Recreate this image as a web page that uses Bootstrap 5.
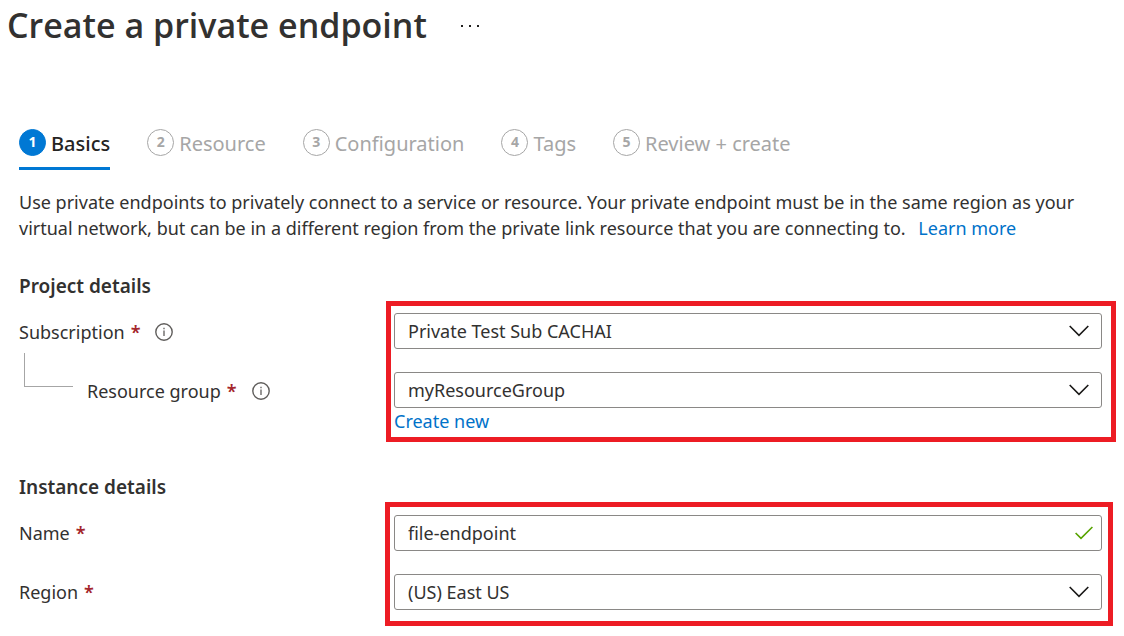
<!DOCTYPE html>
<html lang="en">
<head>
<meta charset="utf-8">
<meta name="viewport" content="width=device-width, initial-scale=1">
<title>Create a private endpoint</title>
<link href="https://cdn.jsdelivr.net/npm/bootstrap@5.3.0/dist/css/bootstrap.min.css" rel="stylesheet">
<style>
  body { font-family: "Noto Sans", "Open Sans", sans-serif; font-size: 18px; line-height: 26px; color: #323130; background: #fff; }
  a { color: #0072c9; text-decoration: none; }
  .page-head { padding-left: 7px; }
  .page-body { padding-left: 19px; }
  .page-title { font-family: "Open Sans", "Noto Sans", sans-serif; font-size: 34px; line-height: 50px; font-weight: 600; }
  .more-btn { color: #201f1e; line-height: 0; margin-left: 23px; }
  .wizard { gap: 37px; margin-top: 79px; font-size: 20px; }
  .wizard .nav-link { gap: 5px; padding: 0 0 11px; color: #a6a6a6; border-bottom: 3px solid transparent; }
  .wizard .nav-link.active { color: #252423; font-weight: 500; border-color: #0078d4; }
  .step-no { width: 27px; height: 27px; border: 1px solid #a6a6a6; border-radius: 50%; font-size: 14px; line-height: 24px; font-weight: 700; text-align: center; }
  .step-name { line-height: 24px; padding-top: 3px; }
  .active .step-no { background: #0078d4; border-color: #0078d4; color: #fff; }
  .intro { margin: 19px 16px 0 0; }
  .section-title { font-size: 19px; line-height: 26px; font-weight: 600; }
  .section-body { margin-top: 2px; }
  .labels { flex: 0 0 367px; gap: 23px; padding-top: 13px; }
  .label-row { height: 36px; gap: 6px; }
  .req { color: #a4262c; font-weight: 600; }
  .info-btn { line-height: 0; margin-left: 9px; color: #605e5c; }
  .branch { width: 49px; height: 34px; border: solid #a6a6a6; border-width: 0 0 1px 1px; margin: -43px 8px 0 5px; }
  .marked { border: 5px solid #ed1c24; padding: 7px 9px 3px 3px; margin-right: 8px; }
  .marked-instance { padding: 8px 6px 11px 4px; margin: 0 11px 0 -1px; }
  .marked .form-select, .marked .form-control { height: 36px; padding: 0 40px 0 13px; border: 1px solid #8a8886; border-radius: 3px; font-size: 18px; line-height: 26px; color: #323130; background-color: #fff; }
  .marked .field-gap { margin-bottom: 23px; }
  .marked .form-select { background-image: url("data:image/svg+xml,%3Csvg xmlns='http://www.w3.org/2000/svg' viewBox='0 0 20 12'%3E%3Cpath d='M.7 1 10 10.3 19.3 1' fill='none' stroke='%231b1a19' stroke-width='1.6'/%3E%3C/svg%3E"); background-size: 20px 12px; background-position: right 12px center; }
  .marked .form-control { background: url("data:image/svg+xml,%3Csvg xmlns='http://www.w3.org/2000/svg' viewBox='0 0 18 14'%3E%3Cpath d='M.6 7 6 12.3 17.4 1' fill='none' stroke='%2357a300' stroke-width='1.6'/%3E%3C/svg%3E") no-repeat right 8px center / 18px 14px; }
</style>
</head>
<body>
<header class="page-head d-flex align-items-center">
  <h1 class="page-title m-0">Create a private endpoint</h1>
  <button type="button" class="more-btn btn p-0 border-0" aria-label="More options">
    <svg width="40" height="20" viewBox="0 0 40 20" fill="currentColor"><path d="M11 10h2v2h-2zM19 10h2v2h-2zM27 10h2v2h-2z"/></svg>
  </button>
</header>
<main class="page-body">
  <nav class="wizard nav flex-nowrap" aria-label="Steps">
    <a class="nav-link active d-flex align-items-center" href="#" aria-current="step"><span class="step-no">1</span><span class="step-name">Basics</span></a>
    <a class="nav-link d-flex align-items-center" href="#"><span class="step-no">2</span><span class="step-name">Resource</span></a>
    <a class="nav-link d-flex align-items-center" href="#"><span class="step-no">3</span><span class="step-name">Configuration</span></a>
    <a class="nav-link d-flex align-items-center" href="#"><span class="step-no">4</span><span class="step-name">Tags</span></a>
    <a class="nav-link d-flex align-items-center" href="#"><span class="step-no">5</span><span class="step-name">Review + create</span></a>
  </nav>
  <p class="intro">Use private endpoints to privately connect to a service or resource. Your private endpoint must be in the same region as your virtual network, but can be in a different region from the private link resource that you are connecting to. <a class="ms-2" href="#">Learn more</a></p>
  <form>
    <section class="pt-4 mt-2">
      <h2 class="section-title m-0">Project details</h2>
      <div class="section-body d-flex">
        <div class="labels d-flex flex-column">
          <div class="label-row d-flex align-items-center">
            <label for="subscription">Subscription</label><span class="req">*</span>
            <button type="button" class="info-btn btn p-0 border-0" aria-label="About subscription"><svg width="18" height="18" viewBox="0 0 18 18" fill="none" stroke="currentColor"><circle cx="9" cy="9" r="8.2" stroke-width="1.4"/><path d="M9 7.5v5.5M9 4.7v1.5" stroke-width="1.3"/></svg></button>
          </div>
          <div class="label-row d-flex align-items-center">
            <span class="branch"></span>
            <label for="group">Resource group</label><span class="req">*</span>
            <button type="button" class="info-btn btn p-0 border-0" aria-label="About resource group"><svg width="18" height="18" viewBox="0 0 18 18" fill="none" stroke="currentColor"><circle cx="9" cy="9" r="8.2" stroke-width="1.4"/><path d="M9 7.5v5.5M9 4.7v1.5" stroke-width="1.3"/></svg></button>
          </div>
        </div>
        <div class="marked flex-grow-1">
          <select id="subscription" class="form-select field-gap"><option>Private Test Sub CACHAI</option></select>
          <select id="group" class="form-select"><option>myResourceGroup</option></select>
          <a class="d-inline-block" href="#">Create new</a>
        </div>
      </div>
    </section>
    <section class="pt-4 mt-2">
      <h2 class="section-title m-0">Instance details</h2>
      <div class="section-body d-flex">
        <div class="labels d-flex flex-column">
          <div class="label-row d-flex align-items-center"><label for="name">Name</label><span class="req">*</span></div>
          <div class="label-row d-flex align-items-center"><label for="region">Region</label><span class="req">*</span></div>
        </div>
        <div class="marked marked-instance flex-grow-1">
          <input id="name" type="text" class="form-control field-gap" value="file-endpoint">
          <select id="region" class="form-select"><option>(US) East US</option></select>
        </div>
      </div>
    </section>
  </form>
</main>
<script src="https://cdn.jsdelivr.net/npm/bootstrap@5.3.0/dist/js/bootstrap.bundle.min.js"></script>
</body>
</html>
